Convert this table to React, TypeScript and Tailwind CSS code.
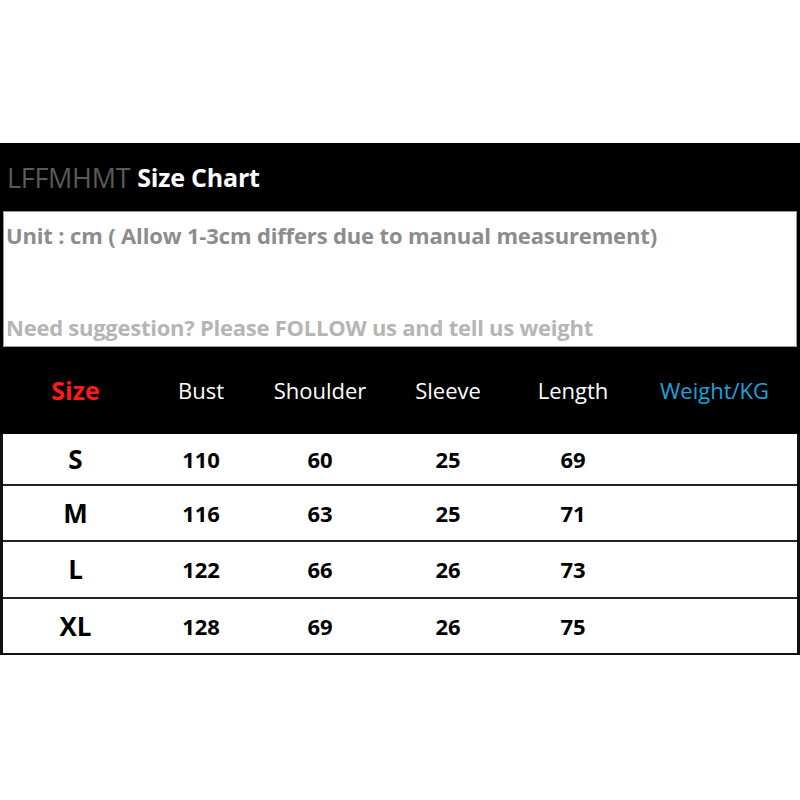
import React from "react";

const cols = "grid grid-cols-[145px_106px_132px_124px_126px_1fr] items-center text-center";

const rows = [
  ["S", "110", "60", "25", "69", "h-[50px]"],
  ["M", "116", "63", "25", "71", "h-[56px]"],
  ["L", "122", "66", "26", "73", "h-[57px]"],
  ["XL", "128", "69", "26", "75", "h-[56px]"],
];

export default function App() {
  return (
    <div className="w-[800px] h-[800px] bg-white" style={{ fontFamily: "'Open Sans', Lato, sans-serif" }}>
      <div className="h-[143px]" />
      <div className="bg-black px-[3px]">
        <div className="h-[68px] flex items-center pl-[4px] leading-none">
          <span className="text-[#5a5a5a] text-[27px] tracking-[-0.3px]">LFFMHMT</span>
          <span className="text-white font-bold text-[25px] ml-[7px] tracking-[-0.2px]">Size Chart</span>
        </div>
        <div className="bg-white h-[136px] border border-[#9a9a9a] flex flex-col justify-between pt-[9px] pb-[5px] pl-[2px] font-bold text-[22px] leading-[28px] tracking-[-0.15px]">
          <div className="text-[#8c8c8c]">Unit : cm ( Allow 1-3cm differs due to manual measurement)</div>
          <div className="text-[#b5b5b5] tracking-[-0.25px]">Need suggestion? Please FOLLOW us and tell us weight</div>
        </div>
        <div className={`${cols} h-[87px] text-[22px] text-white`}>
          <div className="text-[#ff1a1a] font-bold text-[25px]">Size</div>
          <div>Bust</div>
          <div>Shoulder</div>
          <div>Sleeve</div>
          <div>Length</div>
          <div className="text-[#1aa3dc] pr-[4px]">Weight/KG</div>
        </div>
      </div>
      <div className="border-x-[3px] border-b-[2px] border-[#111] w-[800px]">
        {rows.map((r, i) => (
          <div key={r[0]} className={`${cols} ${r[5]} text-[22px] font-bold text-black ${i > 0 ? "border-t-[2px] border-[#222]" : ""}`}>
            <div className="text-[26px]">{r[0]}</div>
            <div>{r[1]}</div>
            <div>{r[2]}</div>
            <div>{r[3]}</div>
            <div>{r[4]}</div>
            <div></div>
          </div>
        ))}
      </div>
    </div>
  );
}
